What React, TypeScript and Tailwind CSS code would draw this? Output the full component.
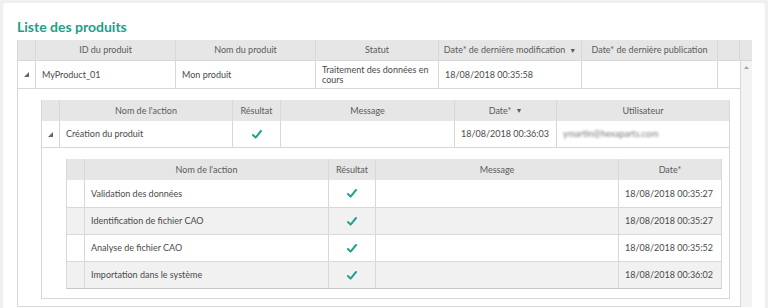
import React from 'react';

const border = 'border-[#d8d8d8]';

const Expander: React.FC = () => (
  <svg width="5" height="5" viewBox="0 0 5 5" className="text-[#666]">
    <polygon points="5,0 5,5 0,5" fill="currentColor" />
  </svg>
);

const Check: React.FC = () => (
  <svg width="10" height="9" viewBox="0 0 10 9">
    <path d="M1 5 L3.6 7.6 L9 1" fill="none" stroke="#1fa38d" strokeWidth="2" strokeLinecap="round" strokeLinejoin="round" />
  </svg>
);

const HeadCell: React.FC<{ children?: React.ReactNode; last?: boolean }> = ({ children, last }) => (
  <div className={`flex items-center justify-center text-[#5b5b5b] ${last ? '' : `border-r ${border}`}`}>
    {children}
  </div>
);

const Cell: React.FC<{ children?: React.ReactNode; last?: boolean; center?: boolean }> = ({ children, last, center }) => (
  <div
    className={`flex items-center px-[6px] text-[#4a4a4a] leading-[10px] ${center ? 'justify-center' : ''} ${
      last ? '' : `border-r ${border}`
    }`}
  >
    {children}
  </div>
);

const steps = [
  { name: 'Validation des données', date: '18/08/2018 00:35:27' },
  { name: 'Identification de fichier CAO', date: '18/08/2018 00:35:27' },
  { name: 'Analyse de fichier CAO', date: '18/08/2018 00:35:52' },
  { name: 'Importation dans le système', date: '18/08/2018 00:36:02' },
];

export default function App() {
  return (
    <div className="h-[308px] w-[768px] overflow-hidden bg-[#eef0f2] p-[3px] text-[9px] font-['Lato',_sans-serif]">
      <div className="h-[320px] rounded-[3px] bg-white pl-[14px] pr-[13px] pt-[15px]">
        <h2 className="mb-[5px] text-[14px] leading-[17px] font-bold text-[#1e9e89]">Liste des produits</h2>

        <div className={`border-l ${border}`}>
          {/* header of the products table */}
          <div className={`grid h-[21px] grid-cols-[18px_140px_140px_123px_143px_136px_22px_12px] border-b ${border} bg-[#e6e6e6]`}>
            <HeadCell />
            <HeadCell>ID du produit</HeadCell>
            <HeadCell>Nom du produit</HeadCell>
            <HeadCell>Statut</HeadCell>
            <HeadCell>
              Date* de dernière modification <span className="ml-[4px] text-[7px]">▼</span>
            </HeadCell>
            <HeadCell>Date* de dernière publication</HeadCell>
            <HeadCell />
            <HeadCell last />
          </div>

          <div className="flex">
            <div className="flex-1">
              <div className={`grid h-[28px] grid-cols-[18px_140px_140px_123px_143px_136px_22px] border-b ${border}`}>
                <Cell center>
                  <Expander />
                </Cell>
                <Cell>MyProduct_01</Cell>
                <Cell>Mon produit</Cell>
                <Cell>Traitement des données en cours</Cell>
                <Cell>18/08/2018 00:35:58</Cell>
                <Cell />
                <Cell last />
              </div>

              {/* expanded product: its actions */}
              <div className={`border-b ${border} pb-[7px] pl-[23px] pr-[10px] pt-[11px]`}>
                <div className={`border-x border-b ${border}`}>
                  <div className={`grid h-[21px] grid-cols-[18px_173px_48px_174px_102px_1fr] bg-[#e6e6e6]`}>
                    <HeadCell />
                    <HeadCell>Nom de l'action</HeadCell>
                    <HeadCell>Résultat</HeadCell>
                    <HeadCell>Message</HeadCell>
                    <HeadCell>
                      Date* <span className="ml-[4px] text-[7px]">▼</span>
                    </HeadCell>
                    <HeadCell last>Utilisateur</HeadCell>
                  </div>
                  <div className={`grid h-[27px] grid-cols-[18px_173px_48px_174px_102px_1fr] border-b ${border}`}>
                    <Cell center>
                      <Expander />
                    </Cell>
                    <Cell>Création du produit</Cell>
                    <Cell center>
                      <Check />
                    </Cell>
                    <Cell />
                    <Cell>18/08/2018 00:36:03</Cell>
                    <Cell last>
                      <span className="text-[#7a7a7a] blur-[1px]">ymartin@hexaparts.com</span>
                    </Cell>
                  </div>

                  {/* expanded action: its steps */}
                  <div className="pb-[9px] pl-[24px] pr-[7px] pt-[11px]">
                    <div className={`border-x ${border} border-b border-b-[#c6c6c6]`}>
                      <div className={`grid h-[21px] grid-cols-[18px_244px_47px_243px_1fr] bg-[#e6e6e6]`}>
                        <HeadCell />
                        <HeadCell>Nom de l'action</HeadCell>
                        <HeadCell>Résultat</HeadCell>
                        <HeadCell>Message</HeadCell>
                        <HeadCell last>Date*</HeadCell>
                      </div>
                      {steps.map((s, i) => (
                        <div
                          key={s.name}
                          className={`grid h-[27px] grid-cols-[18px_244px_47px_243px_1fr] ${
                            i > 0 ? `border-t ${border}` : ''
                          } ${i % 2 === 1 ? 'bg-[#f1f1f1]' : 'bg-white'}`}
                        >
                          <Cell />
                          <Cell>{s.name}</Cell>
                          <Cell center>
                            <Check />
                          </Cell>
                          <Cell />
                          <Cell last>{s.date}</Cell>
                        </div>
                      ))}
                    </div>
                  </div>
                </div>
              </div>
            </div>

            {/* vertical scrollbar */}
            <div className={`w-[12px] border-l ${border} bg-[#f3f3f3]`}>
              <div className="flex h-[12px] items-center justify-center">
                <svg width="5" height="3" viewBox="0 0 5 3">
                  <polygon points="0,3 2.5,0 5,3" fill="#a8a8a8" />
                </svg>
              </div>
            </div>
          </div>
        </div>
      </div>
    </div>
  );
}
